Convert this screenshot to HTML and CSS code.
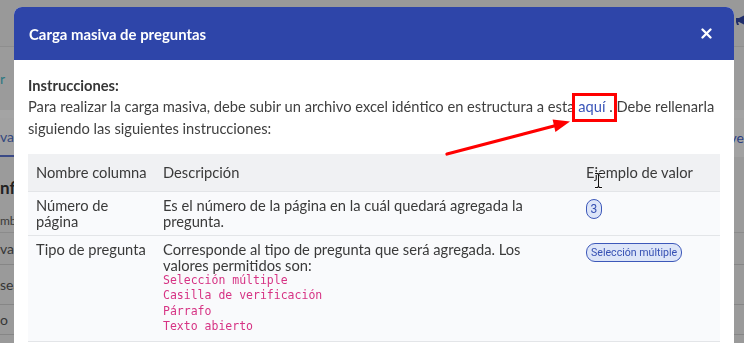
FILE: index.html
```html
<!DOCTYPE html>
<html lang="es">
<head>
<meta charset="utf-8">
<title>Carga masiva de preguntas</title>
<link rel="stylesheet" href="styles.css">
</head>
<body>
<div class="bg-page" aria-hidden="true">
  <div class="bg-nav">
    <span></span>
    <svg class="bg-icon" width="12" height="12" viewBox="0 0 12 12"><path d="M1 4h3l6-3v10L4 8H3l1 3H2L1 8z" fill="#1f2d6b"/></svg>
  </div>
  <div class="bg-row bg-filter"><span class="frag teal">r</span><span></span></div>
  <div class="bg-band"></div>
  <div class="bg-row bg-tabs"><span class="frag tab">va</span><span class="frag tab-r">ve</span></div>
  <div class="bg-row bg-title"><span class="frag bold">nfiguración</span><span></span></div>
  <div class="bg-row bg-sub"><span class="frag small">mbre de la encuesta</span><span></span></div>
  <div class="bg-row bg-line r1"><span class="frag">val</span><span></span></div>
  <div class="bg-row bg-line r2"><span class="frag">sea</span><span></span></div>
  <div class="bg-row bg-line r3"><span class="frag">o</span><span></span></div>
  <div class="bg-row bg-line r4"><span class="frag"></span><span></span></div>
</div>

<div class="modal" role="dialog" aria-labelledby="modal-title">
  <div class="modal-header">
    <h2 id="modal-title" class="modal-title">Carga masiva de preguntas</h2>
    <button class="close" aria-label="Cerrar">
      <svg width="11" height="11" viewBox="0 0 11 11"><path d="M1.5 1.5l8 8M9.5 1.5l-8 8" stroke="#fff" stroke-width="2.3" stroke-linecap="round"/></svg>
    </button>
  </div>
  <div class="modal-body">
    <p class="instr-title">Instrucciones:</p>
    <p class="instr">Para realizar la carga masiva, debe subir un archivo excel idéntico en estructura a esta <a class="link hl" href="#">aquí</a> . Debe rellenarla siguiendo las siguientes instrucciones:</p>

    <table class="spec">
      <thead>
        <tr><th class="c1">Nombre columna</th><th class="c2">Descripción</th><th class="c3">Ejemplo de valor</th></tr>
      </thead>
      <tbody>
        <tr>
          <td>Número de página</td>
          <td>Es el número de la página en la cuál quedará agregada la pregunta.</td>
          <td><span class="badge badge-num">3</span></td>
        </tr>
        <tr>
          <td>Tipo de pregunta</td>
          <td>Corresponde al tipo de pregunta que será agregada. Los valores permitidos son:
            <code>Selección múltiple</code>
            <code>Casilla de verificación</code>
            <code>Párrafo</code>
            <code>Texto abierto</code>
          </td>
          <td><span class="badge">Selección múltiple</span></td>
        </tr>
      </tbody>
    </table>
  </div>

  <svg class="arrow" width="720" height="200" viewBox="0 0 720 200" aria-hidden="true">
    <line x1="433" y1="147" x2="540" y2="119" stroke="#ff0000" stroke-width="3.2" stroke-linecap="round"/>
    <polygon points="556,114.6 538.6,112.6 541.4,124.9" fill="#ff0000"/>
  </svg>
  <svg class="ibeam" width="9" height="17" viewBox="0 0 9 17" aria-hidden="true">
    <path d="M1 1.5h2.5L4.5 2.5l1-1H8M4.5 2.5v12M1 15.5h2.5l1-1 1 1H8" fill="none" stroke="#fff" stroke-width="2.6"/>
    <path d="M1 1.5h2.5L4.5 2.5l1-1H8M4.5 2.5v12M1 15.5h2.5l1-1 1 1H8" fill="none" stroke="#111" stroke-width="1.1"/>
  </svg>
</div>
</body>
</html>
```
FILE: styles.css
```css
* { box-sizing: border-box; }
html, body { margin: 0; padding: 0; }
body {
  width: 744px;
  height: 343px;
  overflow: hidden;
  background: #9a9a9a;
  font-family: "Lato", "Liberation Sans", sans-serif;
  font-size: 14.7px;
  color: #3d3d3d;
}

/* ---------- dimmed page behind the modal ---------- */
.bg-page { display: flex; flex-direction: column; }
.bg-nav {
  height: 47px;
  display: flex;
  justify-content: space-between;
  align-items: flex-start;
  padding: 14px 0 0 0;
  border-bottom: 1px solid #8e8e8e;
  background: #999;
}
.bg-icon { margin-right: -3px; }
.bg-row {
  display: flex;
  justify-content: space-between;
  align-items: center;
  white-space: nowrap;
}
.frag { font-size: 14px; color: #363636; }
.bg-filter { height: 63px; background: #9b9b9b; }
.teal { color: #2c7781; }
.bg-band { height: 8px; background: #a4a4a4; }
.bg-tabs { height: 39px; background: #a2a2a2; align-items: stretch; }
.tab {
  display: flex;
  align-items: center;
  color: #34477e;
  border-bottom: 2px solid #3b4a86;
}
.tab-r { display: flex; align-items: center; color: #2c3f82; }
.bg-title { height: 52px; padding-top: 8px; background: #9b9b9b; }
.bold { font-weight: 700; font-size: 17px; color: #222; }
.bg-sub { height: 24px; border-bottom: 1px solid #8b8b8b; background: #9b9b9b; }
.small { font-size: 12px; color: #3a3a3a; }
.bg-line { border-bottom: 1px solid #868686; background: #9a9a9a; }
.r1 { height: 32px; }
.r2 { height: 40px; }
.r3 { height: 30px; }
.r4 { height: 30px; }

/* ---------- modal ---------- */
.modal {
  position: fixed;
  left: 14px;
  top: 7px;
  width: 720px;
  height: 400px;
  background: #fff;
  border-radius: 8px 8px 0 0;
  overflow: hidden;
}
.modal-header {
  height: 53px;
  background: #2e45a9;
  display: flex;
  align-items: center;
  justify-content: space-between;
  padding: 0 22px 0 15px;
}
.modal-title {
  margin: 0;
  font-size: 14.9px;
  font-weight: 700;
  color: #fff;
}
.close {
  background: none;
  border: 0;
  padding: 0;
  width: 11px;
  height: 11px;
  display: flex;
}

.modal-body { padding: 15px 14px 0 14px; }
.instr-title {
  margin: 0;
  font-weight: 700;
  line-height: 21px;
  color: #363636;
}
.instr {
  margin: 0;
  line-height: 21.5px;
  color: #3f3f3f;
}
.link { color: #3a55b9; text-decoration: none; }
.hl { position: relative; }
.hl::after {
  content: "";
  position: absolute;
  left: -6px;
  right: -11px;
  top: -4px;
  bottom: -7px;
  border: 3px solid #ff0000;
}

/* ---------- table ---------- */
.spec {
  margin-top: 15px;
  width: 692px;
  border-collapse: collapse;
  table-layout: fixed;
  color: #3a3a3a;
  line-height: 16px;
}
.c1 { width: 127px; }
.c2 { width: 423px; }
.c3 { width: 142px; }
.spec th {
  text-align: left;
  font-weight: 400;
  background: #f0f1f3;
  padding: 10px 8px 11px 8px;
  border-bottom: 1px solid #e3e5e8;
}
.spec td {
  vertical-align: top;
  background: #f9fafc;
  padding: 5px 8px 6px 8px;
  border-bottom: 1px solid #e3e5e8;
}
.spec td:nth-child(2) { padding-right: 20px; }
code {
  display: block;
  font-family: "DejaVu Sans Mono", monospace;
  font-size: 11.5px;
  line-height: 15.4px;
  color: #d63384;
}
.badge {
  display: inline-block;
  margin-top: 2px;
  padding: 0 4px;
  font-family: "Roboto", "Liberation Sans", sans-serif;
  font-size: 10.6px;
  line-height: 17px;
  color: #3650b3;
  background: #dde5f8;
  border: 1px solid #3d58b9;
  border-radius: 9px;
}
.badge-num { padding: 0 3.5px; font-size: 12px; line-height: 18px; }

.arrow { position: absolute; left: 0; top: 0; pointer-events: none; }
.ibeam { position: absolute; left: 580px; top: 165px; pointer-events: none; }
```
